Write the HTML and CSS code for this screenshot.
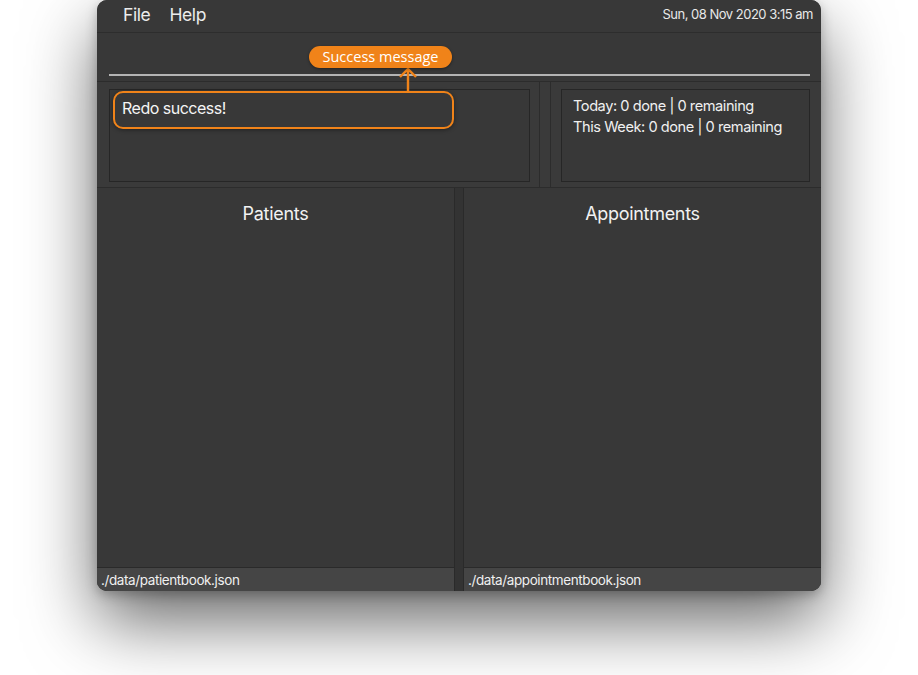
FILE: index.html
```html
<!DOCTYPE html>
<html>
<head>
<meta charset="utf-8">
<link rel="stylesheet" href="styles.css">
</head>
<body>
<div class="window">
  <div class="menubar">
    <div class="menus"><span class="menu">File</span><span class="menu">Help</span></div>
    <div class="clock">Sun, 08 Nov 2020 3:15 am</div>
  </div>
  <div class="command">
    <div class="command-line"></div>
  </div>
  <div class="results">
    <div class="result-pane left">
      <div class="result-box"><div class="result-text">Redo success!</div></div>
    </div>
    <div class="vdivider"></div>
    <div class="result-pane right">
      <div class="result-box stats">
        <div>Today: 0 done | 0 remaining</div>
        <div>This Week: 0 done | 0 remaining</div>
      </div>
    </div>
  </div>
  <div class="lists">
    <div class="list-pane first">
      <div class="list-title">Patients</div>
      <div class="list-body"></div>
      <div class="status">./data/patientbook.json</div>
    </div>
    <div class="list-divider"></div>
    <div class="list-pane">
      <div class="list-title">Appointments</div>
      <div class="list-body"></div>
      <div class="status">./data/appointmentbook.json</div>
    </div>
  </div>

  <div class="callout-box"></div>
  <svg class="callout-arrow" width="24" height="26" viewBox="0 0 24 26">
    <path d="M12 26 V3 M4 10 L12 2 L20 10" fill="none" stroke="#f08319" stroke-width="2.4"/>
  </svg>
  <div class="callout-pill">Success message</div>
</div>
</body>
</html>
```
FILE: styles.css
```css
*, *::before, *::after {
  box-sizing: border-box;
}
html, body {
  margin: 0;
  padding: 0;
  background: #ffffff;
}
body {
  width: 918px;
  height: 675px;
  overflow: hidden;
  font-family: Inter, "Liberation Sans", sans-serif;
}
.window {
  position: relative;
  margin-left: 97px;
  width: 724px;
  height: 591px;
  background: #3a3a3a;
  border-radius: 10px;
  box-shadow: 0 30px 70px rgba(0, 0, 0, 0.6), 0 4px 12px rgba(0,0,0,0.25);
  display: flex;
  flex-direction: column;
  overflow: hidden;
  color: #f2f2f2;
}
.menubar {
  height: 33px;
  flex: none;
  display: flex;
  align-items: center;
  justify-content: space-between;
  background: #383838;
  border-bottom: 1px solid #2d2d2d;
  padding: 0 8px 4px 26px;
}
.menus {
  display: flex;
  gap: 19px;
}
.menu {
  font-size: 17.5px;
  color: #ececec;
  letter-spacing: -0.4px;
}
.clock {
  font-size: 13px;
  color: #e8e8e8;
  letter-spacing: -0.5px;
}
.command {
  height: 49px;
  flex: none;
  background: #383838;
  display: flex;
  align-items: flex-end;
  padding: 0 11px 5px 12px;
  border-bottom: 1px solid #2c2c2c;
}
.command-line {
  flex: 1;
  height: 2px;
  background: #b4b4b4;
}
.results {
  height: 106px;
  flex: none;
  display: flex;
  background: #3a3a3a;
  border-bottom: 1px solid #2c2c2c;
}
.result-pane {
  display: flex;
  padding: 7px 9px 5px 12px;
}
.result-pane.left {
  width: 443px;
  border-right: 1px solid #2c2c2c;
}
.result-pane.right {
  flex: 1;
  padding: 7px 11px 5px 10px;
  border-left: 1px solid #2c2c2c;
}
.vdivider {
  width: 10px;
  background: #3a3a3a;
}
.result-box {
  flex: 1;
  border: 1px solid #262626;
  background: #383838;
}
.result-text {
  font-size: 16px;
  padding: 8px 0 0 12px;
  color: #f5f5f5;
  letter-spacing: -0.5px;
}
.stats {
  padding: 6px 0 0 11px;
  font-size: 14.6px;
  line-height: 21px;
  letter-spacing: -0.45px;
  color: #f0f0f0;
}
.lists {
  flex: 1;
  display: flex;
}
.list-pane {
  display: flex;
  flex-direction: column;
  flex: 1;
  background: #383838;
}
.list-pane.first {
  flex: none;
  width: 357px;
}
.list-divider {
  width: 10px;
  flex: none;
  background: #333333;
  border-left: 1px solid #2a2a2a;
  border-right: 1px solid #2a2a2a;
}
.list-title {
  text-align: center;
  font-size: 18px;
  padding-top: 15px;
  color: #f2f2f2;
  letter-spacing: -0.3px;
}
.list-body {
  flex: 1;
  border-bottom: 1px solid #2a2a2a;
}
.status {
  height: 23px;
  flex: none;
  background: #454545;
  font-size: 13.5px;
  line-height: 25px;
  padding-left: 4px;
  color: #f0f0f0;
  letter-spacing: -0.4px;
}
.callout-box {
  position: absolute;
  left: 16px;
  top: 91px;
  width: 341px;
  height: 38px;
  border: 2.5px solid #f08319;
  border-radius: 10px;
  box-shadow: 0 1px 4px rgba(0,0,0,0.4);
}
.callout-arrow {
  position: absolute;
  left: 299px;
  top: 67px;
}
.callout-pill {
  position: absolute;
  left: 212px;
  top: 46px;
  width: 143px;
  height: 22px;
  border-radius: 11px;
  background: #f08319;
  color: #ffffff;
  font-family: "Open Sans", "DejaVu Sans", sans-serif;
  font-size: 14.5px;
  line-height: 22px;
  text-align: center;
  box-shadow: 0 1px 3px rgba(0,0,0,0.4);
}
```
